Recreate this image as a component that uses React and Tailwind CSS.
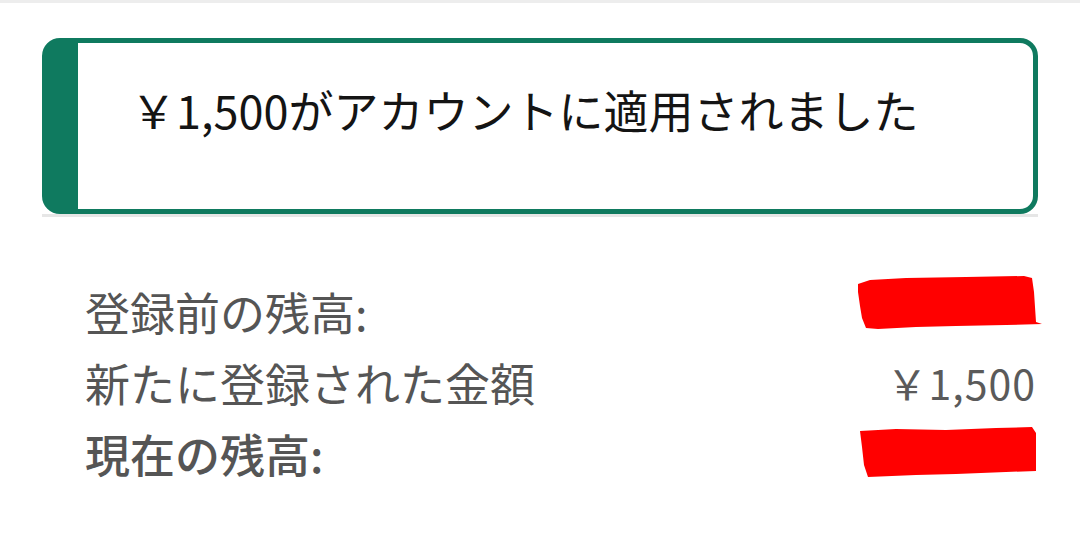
import React from 'react';

const jp = { fontFamily: '"Noto Sans CJK JP", "Noto Sans", sans-serif' };

// Hand-drawn red marker stroke covering a hidden amount
function Redaction({ variant }) {
    if (variant === 'top') {
        return (
            <svg width="188" height="60" viewBox="0 0 188 60" className="block -translate-y-[10px]">
                <path d="M2 12 L14 8 L50 6 L110 5 L168 4 L176 6 L178 20 L180 50 L186 52 L150 53 L100 54 L60 55 L22 57 L10 56 L6 46 L4 34 L2 20 Z" fill="#ff0000" />
            </svg>
        );
    }
    return (
        <svg width="188" height="56" viewBox="0 0 188 56" className="block -translate-y-[1px]">
            <path d="M4 6 L40 4 L90 5 L140 3 L176 2 L180 8 L180 46 L150 47 L100 49 L60 50 L12 52 L8 40 L6 22 Z" fill="#ff0000" />
        </svg>
    );
}

function Row({ label, value, bold, redacted }) {
    return (
        <div className="flex items-center justify-between h-[71px]">
            <span className={`text-[45px] leading-none text-[#555555] ${bold ? 'font-medium' : ''}`}>{label}</span>
            {redacted ? (
                <div className="-mr-[8px]">
                    <Redaction variant={redacted} />
                </div>
            ) : (
                <span className="text-[41px] leading-none text-[#5a5a5a] tracking-[1px]">{value}</span>
            )}
        </div>
    );
}

export default function App() {
    return (
        <div className="w-[1080px] h-[542px] bg-white overflow-hidden" style={jp}>
            <div className="h-[3px] bg-[#ededed]" />

            {/* Confirmation banner */}
            <div className="px-[42px] pt-[35px]">
                <div className="h-[176px] rounded-[18px] border-[5px] border-l-[36px] border-[#0f7a5f] bg-white pl-[53px] pt-[44px]">
                    <p className="text-[45px] leading-none text-[#141414]">￥1,500がアカウントに適用されました</p>
                </div>
                <div className="h-[3px] bg-[#e6e6e6]" />
            </div>

            {/* Balance summary */}
            <div className="pl-[85px] pr-[44px] pt-[59px]">
                <Row label="登録前の残高:" redacted="top" />
                <Row label="新たに登録された金額" value="￥1,500" />
                <Row label="現在の残高:" bold redacted="bottom" />
            </div>
        </div>
    );
}
